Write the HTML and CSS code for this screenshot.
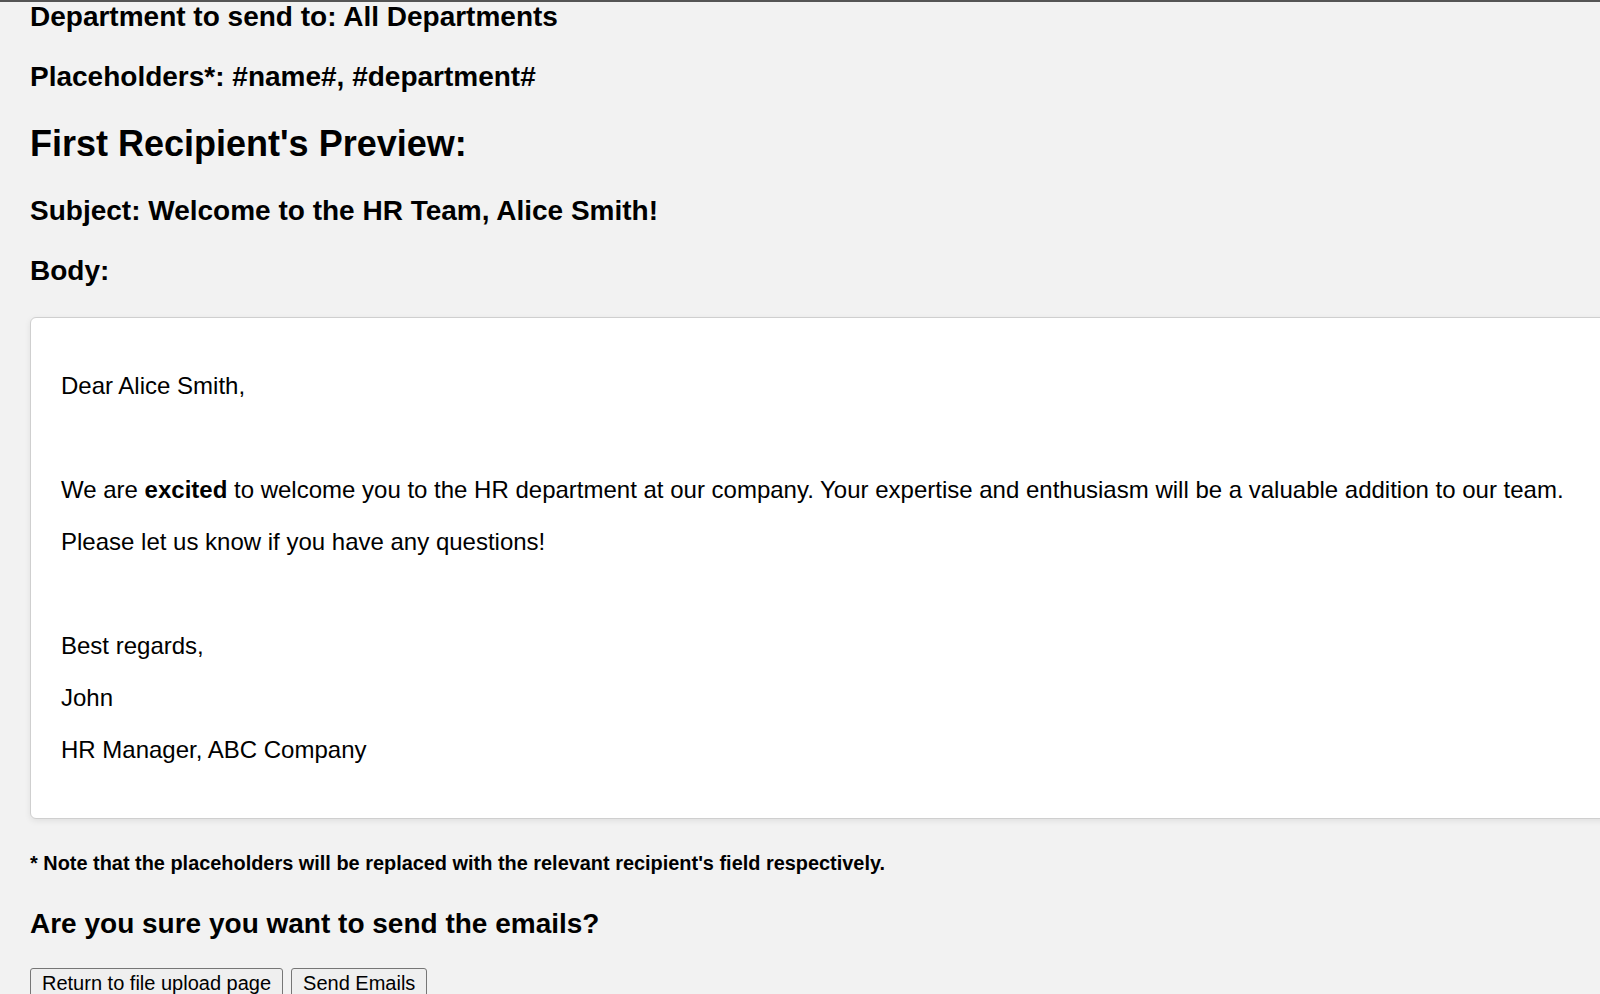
FILE: index.html
```html
<!DOCTYPE html>
<html lang="en">
<head>
<meta charset="utf-8">
<title>Confirm Emails</title>
<link rel="stylesheet" href="styles.css">
</head>
<body>
<div class="topline"></div>
<main class="page">
  <h3 class="first">Department to send to: All Departments</h3>
  <h3>Placeholders*: #name#, #department#</h3>
  <h2>First Recipient's Preview:</h2>
  <h3>Subject: Welcome to the HR Team, Alice Smith!</h3>
  <h3>Body:</h3>
  <div class="preview">
    <p>Dear Alice Smith,</p>
    <p>&nbsp;</p>
    <p>We are <strong>excited</strong> to welcome you to the HR department at our company. Your expertise and enthusiasm will be a valuable addition to our team.</p>
    <p>Please let us know if you have any questions!</p>
    <p>&nbsp;</p>
    <p>Best regards,</p>
    <p>John</p>
    <p>HR Manager, ABC Company</p>
  </div>
  <h5>* Note that the placeholders will be replaced with the relevant recipient's field respectively.</h5>
  <h3>Are you sure you want to send the emails?</h3>
  <div class="actions">
    <button class="btn" type="button">Return to file upload page</button>
    <button class="btn" type="button">Send Emails</button>
  </div>
</main>
</body>
</html>
```
FILE: styles.css
```css
html {
  overflow: hidden;
  background: #f2f2f2;
}
body {
  margin: 0;
  font-family: "Liberation Sans", Arial, sans-serif;
  font-size: 24px;
  color: #000;
  background: #f2f2f2;
}
.topline {
  height: 2px;
  background: #555;
}
.page {
  padding: 0 30px;
  margin-top: -29px;
}
h3 {
  font-size: 28px;
  font-weight: bold;
  margin: 28px 0;
}
h2 {
  font-size: 36px;
  font-weight: bold;
  margin: 30px 0;
}
h5 {
  font-size: 19.92px;
  font-weight: bold;
  margin: 33px 0;
}
.preview {
  background: #fff;
  border: 1px solid #cfcfcf;
  border-radius: 6px;
  box-shadow: 0 2px 6px rgba(0, 0, 0, 0.08);
  padding: 30px;
  width: 1600px;
  margin-top: 30px;
}
.preview p {
  margin: 24px 0;
  white-space: nowrap;
}
.actions {
  display: flex;
  gap: 8px;
}
.btn {
  font-family: "Liberation Sans", Arial, sans-serif;
  font-size: 20px;
  color: #000;
  background: #efefef;
  border: 1.5px solid #767676;
  border-radius: 3px;
  padding: 3px 11px;
}
```
